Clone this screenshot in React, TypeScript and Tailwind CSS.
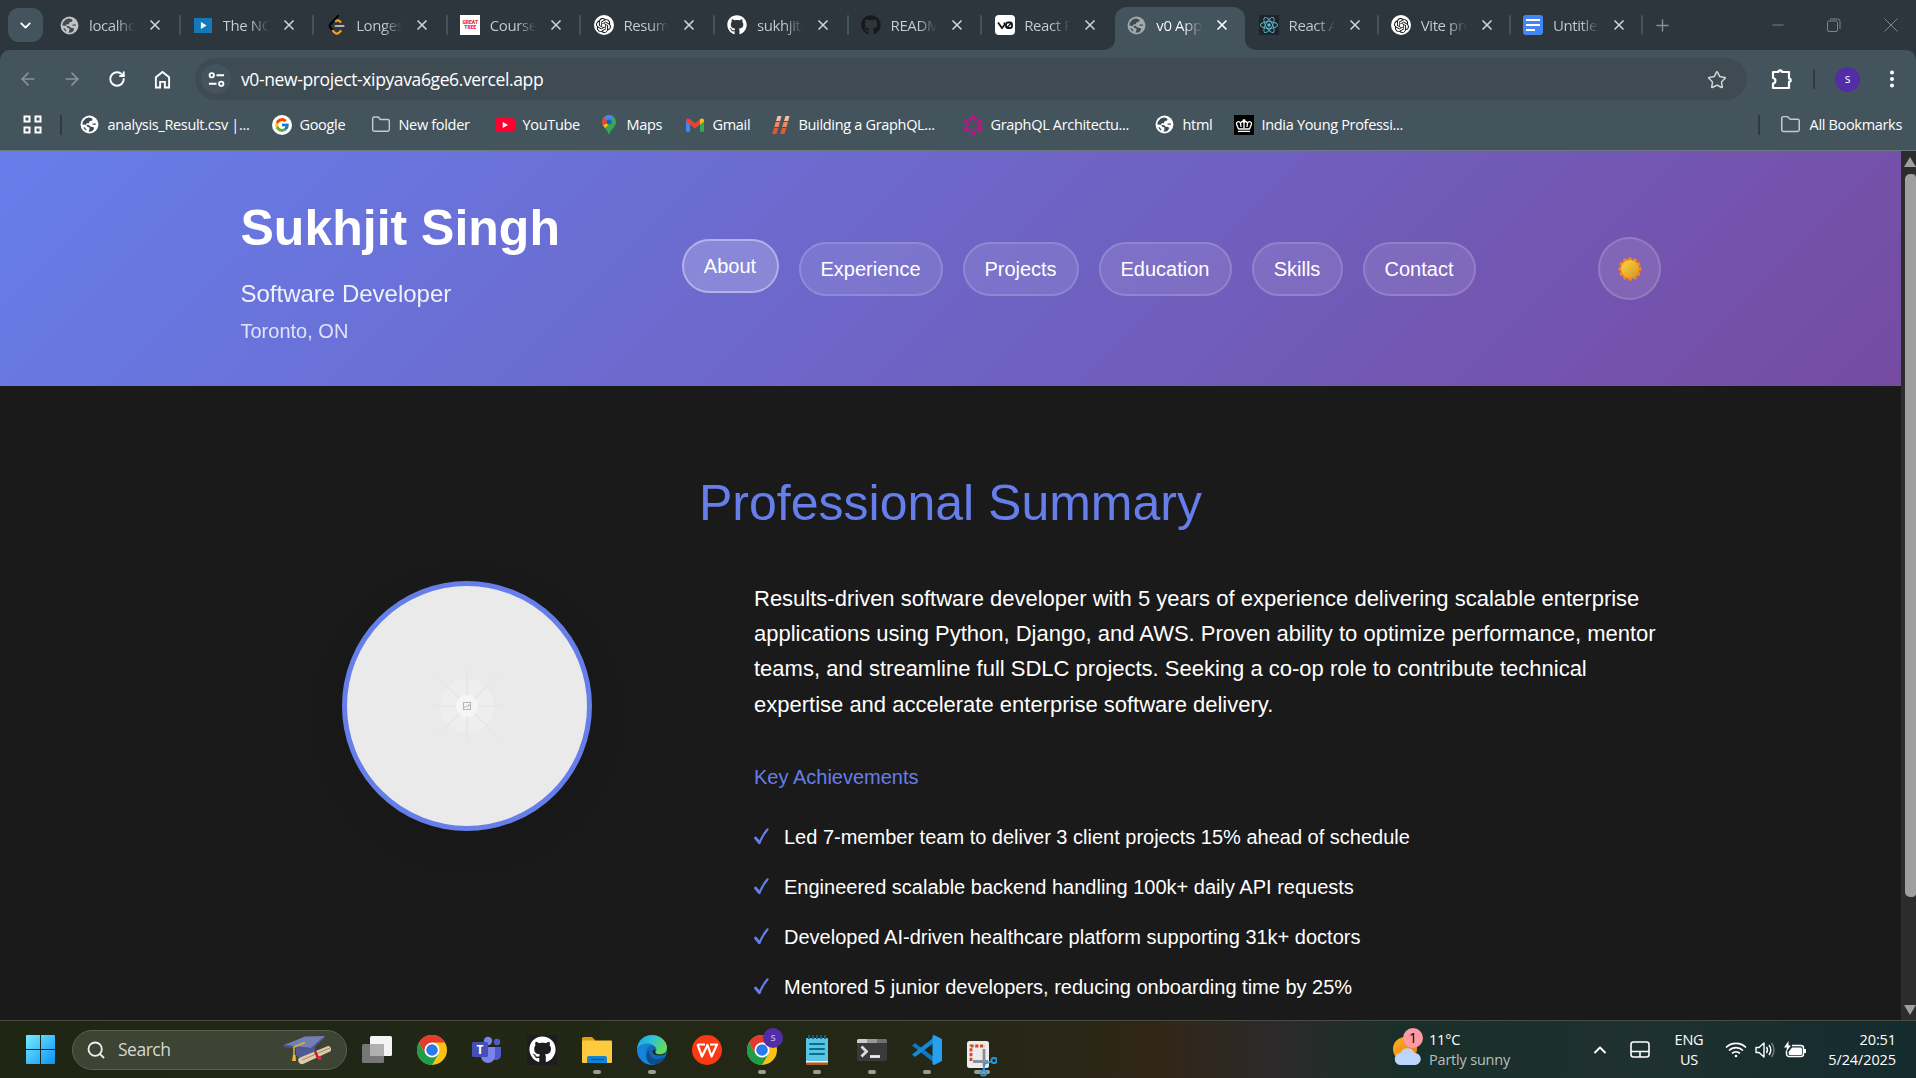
import React, { ReactNode } from "react";
import {
  ArrowLeft, ArrowRight, RotateCw, X, ChevronDown, Plus, Minus, Star, EllipsisVertical, Folder, Search, ChevronUp,
} from "lucide-react";
import { FaGithub } from "react-icons/fa";
import { SiOpenai, SiReact, SiGraphql } from "react-icons/si";
import { FcGoogle } from "react-icons/fc";

const Globe = ({ className = "" }: { className?: string }) => (
  <svg viewBox="0 0 20 20" className={`h-[19px] w-[19px] ${className}`}>
    <circle cx="10" cy="10" r="9.4" fill="currentColor" />
    <path d="M9.2 2.6 6 3.6 3 7l-.6 3 3.2.3c1.4.2 2 1 2.2 2.2l2 .4.2 2-1 2.7 3.8-.4 1.6-2.2c.6-1 .3-2-.8-2.3l-2.2-.4-1.8-1.6-3.3-.4.6-1.5h2.4l1-2.4 2.3-.3.6-1.6-1.3-1.4z" fill="#3d4a52" />
    <path d="M13.2 9.5h3.5M4 13l2.5 3" stroke="#3d4a52" strokeWidth="1.3" />
  </svg>
);

const Gpt = () => (
  <span className="flex h-5 w-5 items-center justify-center rounded-full bg-white">
    <SiOpenai size={15} color="#111" />
  </span>
);

const Docs = () => (
  <span className="flex h-5 w-5 flex-col justify-center gap-[2.5px] rounded-[3px] bg-[#4285f4] pl-[3px]">
    <i className="h-[2.5px] w-[14px] bg-white" />
    <i className="h-[2.5px] w-[14px] bg-white" />
    <i className="h-[2.5px] w-[9px] bg-white" />
  </span>
);

type Tab = { t: string; icon: ReactNode; active?: boolean; w: string; bar?: boolean };
const A = "w-[133.6px]";
const B = "w-[132.2px]";
const tabs: Tab[] = [
  { t: "localhost", icon: <Globe className="text-[#c0c3c5]" />, w: A, bar: true },
  {
    t: "The NO", w: A, bar: true,
    icon: (
      <span className="flex h-[15px] w-[18px] items-center justify-center bg-[#1479b8]">
        <svg viewBox="0 0 8 8" className="h-[7px] w-[7px]"><path d="M1 0l6.5 4L1 8z" fill="#fff" /></svg>
      </span>
    ),
  },
  {
    t: "Longest", w: A, bar: true,
    icon: (
      <svg viewBox="0 0 20 20" className="h-5 w-5" fill="none" strokeLinecap="round" strokeWidth="2.2">
        <path d="M11 1 3.6 9a3 3 0 0 0 0 4L6 15.6" stroke="#050505" />
        <path d="M9 6.2c1.6-1.3 3-.9 4.4.8M6 15.8l1.5 1.7c1.3 1.4 3 1.3 4.5.1l1.6-1.6" stroke="#f9a01b" />
        <path d="M8.5 11h8" stroke="#b3b3b3" />
      </svg>
    ),
  },
  {
    t: "Courses", w: A, bar: true,
    icon: (
      <span className="flex h-5 w-5 flex-col items-center justify-center bg-white font-['Roboto',sans-serif] text-[5px] leading-[5px] font-black text-[#e8283c]">
        <span>GREAT</span><span>TREE</span>
      </span>
    ),
  },
  { t: "Resume", icon: <Gpt />, w: A, bar: true },
  { t: "sukhjits", icon: <FaGithub size={20} color="#fff" />, w: A, bar: true },
  { t: "README", icon: <FaGithub size={20} color="#171a1d" />, w: A, bar: true },
  {
    t: "React Pr", w: B,
    icon: (
      <svg viewBox="0 0 20 20" className="h-5 w-5">
        <rect width="20" height="20" rx="4" fill="#fff" />
        <path d="M3 7.5 7 13 9.5 10V7.5" fill="none" stroke="#111" strokeWidth="1.8" />
        <rect x="11" y="7.5" width="6" height="5.5" rx="2" fill="none" stroke="#111" strokeWidth="1.8" />
        <path d="m12 12.5 4.5-4.5" stroke="#111" strokeWidth="1.3" />
      </svg>
    ),
  },
  { t: "v0 App", icon: <Globe className="text-[#a2a8ac]" />, w: B, active: true },
  {
    t: "React Ap", w: B, bar: true,
    icon: <span className="flex h-5 w-5 items-center justify-center bg-[#20232a]"><SiReact size={18} color="#58c4dc" /></span>,
  },
  { t: "Vite pro", icon: <Gpt />, w: B, bar: true },
  { t: "Untitled", icon: <Docs />, w: B, bar: true },
];

function TabStrip() {
  return (
    <div className="flex h-[50px] items-stretch bg-[#2c363c]">
      <div className="mt-2 ml-2 flex h-[34px] w-[35px] items-center justify-center rounded-[11px] bg-[#44545d]">
        <ChevronDown size={17} color="#fff" strokeWidth={2.6} />
      </div>
      <div className="ml-[3px] flex">
        {tabs.map((b, i) => (
          <div key={i} className={`relative flex items-end ${b.w}`}>
            {b.active && (
              <>
                <div className="absolute top-[7px] right-[1px] bottom-0 left-[2px] rounded-t-[12px] bg-[#44545d]" />
                <svg className="absolute bottom-0 left-[-10px] h-3 w-3" viewBox="0 0 12 12"><path d="M12 0v12H0C7 12 12 8 12 0" fill="#44545d" /></svg>
                <svg className="absolute right-[-11px] bottom-0 h-3 w-3" viewBox="0 0 12 12"><path d="M0 0v12h12C5 12 0 8 0 0" fill="#44545d" /></svg>
              </>
            )}
            <div className="relative flex h-[50px] w-full items-center pl-[13.5px]">
              <span className="flex w-5 shrink-0 justify-center">{b.icon}</span>
              <span className={`mt-[1px] ml-[9.5px] w-[46px] overflow-hidden bg-gradient-to-r from-60% to-[#ffffff00] to-100% bg-clip-text text-[15px] tracking-[-0.4px] whitespace-nowrap text-transparent ${b.active ? "from-white" : "from-[#c9cdcf]"}`}>
                {b.t}
              </span>
              <X size={16} strokeWidth={2.5} className={`ml-[12px] shrink-0 ${b.active ? "text-white" : "text-[#cfd3d5]"}`} />
              {b.bar && <i className="absolute top-[15px] right-[-1px] h-5 w-[2px] rounded bg-[#44545d]" />}
            </div>
          </div>
        ))}
      </div>
      <div className="flex flex-1 items-center">
        <Plus size={19} strokeWidth={1.8} className="ml-[11px] text-[#8b9195]" />
        <div className="ml-auto flex items-center text-[#7f868a]">
          <Minus size={18} strokeWidth={1.2} className="mr-[40px]" />
          <svg viewBox="0 0 14 14" className="mr-[43px] h-[14px] w-[14px]" fill="none" stroke="currentColor">
            <rect x=".5" y="3" width="10" height="10.5" rx="1.5" />
            <path d="M3 1h7.5a2.5 2.5 0 0 1 2.5 2.5V11" />
          </svg>
          <svg viewBox="0 0 14 14" className="mr-[18px] h-[14px] w-[14px]" stroke="currentColor"><path d="M.5.5l13 13M13.5.5l-13 13" /></svg>
        </div>
      </div>
    </div>
  );
}

function Toolbar() {
  return (
    <div className="bg-[#2c363c]">
      <div className="flex h-[50px] items-center rounded-t-[10px] bg-[#44545d] pt-2 text-white">
        <ArrowLeft size={20} strokeWidth={2} className="ml-[18px] text-[#8a949a]" />
        <ArrowRight size={20} strokeWidth={2} className="ml-[24px] text-[#8a949a]" />
        <RotateCw size={18} strokeWidth={2.5} className="ml-[26px]" />
        <svg viewBox="0 0 18 20" className="ml-[28px] h-[19px] w-[17px]" fill="none" stroke="#fff" strokeWidth="2"><path d="M2 18.500V7.500L9 2l7 5.500v11h-4.500v-6h-5v6z" /></svg>
        <div className="ml-[24px] flex h-[42px] w-[1552px] items-center rounded-full bg-[#3f4b52] pr-[20px] pl-[6px]">
          <div className="flex h-[30px] w-[30px] items-center justify-center rounded-full bg-[#44545d]">
            <svg viewBox="0 0 18 18" className="h-[17px] w-[17px]" fill="none" stroke="#fff" strokeWidth="2">
              <circle cx="4" cy="4.5" r="2.3" /><path d="M9 4.500h8M1 13.500h8" /><circle cx="14" cy="13.5" r="2.3" />
            </svg>
          </div>
          <span className="mt-[1px] ml-[10px] text-[17.5px] tracking-[-0.38px]">v0-new-project-xipyava6ge6.vercel.app</span>
          <Star size={20} strokeWidth={1.8} className="mt-[1px] ml-auto text-[#d0d4d6]" />
        </div>
        <svg viewBox="0 0 24 24" className="ml-[22px] h-[24px] w-[24px]" fill="none" stroke="#fff" strokeWidth="2.2" strokeLinejoin="round">
          <path d="M4 5h5.500a1.700 1.700 0 0 1 3.400 0H20v6.500a1.700 1.700 0 0 1 0 3.400V21H4v-4.500c3.200-.6 3.200-5 0-5.500z" />
        </svg>
        <i className="ml-[20px] h-5 w-[2px] bg-[#2f3b42]" />
        <span className="ml-[20px] flex h-[25px] w-[25px] items-center justify-center rounded-full bg-[#512da8] text-[12px]">s</span>
        <EllipsisVertical size={22} strokeWidth={2.4} className="ml-[21px]" />
      </div>
    </div>
  );
}

const bookmarks: { t: string; icon: ReactNode; w: string }[] = [
  { t: "analysis_Result.csv |...", icon: <Globe className="text-white" />, w: "w-[192px]" },
  { t: "Google", icon: <span className="flex h-5 w-5 items-center justify-center rounded-full bg-white"><FcGoogle size={16} /></span>, w: "w-[99px]" },
  { t: "New folder", icon: <Folder size={21} strokeWidth={1.7} className="text-[#c7cbcd]" />, w: "w-[124px]" },
  {
    t: "YouTube", w: "w-[104px]",
    icon: <span className="flex h-[14px] w-5 items-center justify-center rounded-[3px] bg-[#ff0033]"><svg viewBox="0 0 8 8" className="h-[6px] w-[6px]"><path d="M1 0l7 4-7 4z" fill="#fff" /></svg></span>,
  },
  {
    t: "Maps", w: "w-[86px]",
    icon: (
      <svg viewBox="0 0 14 20" className="h-5 w-[14px]">
        <path d="M7 0a7 7 0 0 0-7 7c0 5 5 6.500 7 13 2-6.500 7-8 7-13a7 7 0 0 0-7-7" fill="#34a853" />
        <path d="M7 0a7 7 0 0 0-5.300 2.400L7 7l4.700-5.300A7 7 0 0 0 7 0" fill="#4285f4" />
        <path d="M1.700 2.400A7 7 0 0 0 1 10.500L7 7z" fill="#ea4335" />
        <path d="M1 10.500 3.300 13 9 7H7z" fill="#fbbc04" />
        <circle cx="7" cy="7" r="2.5" fill="#1a5fc4" />
      </svg>
    ),
  },
  {
    t: "Gmail", w: "w-[86px]",
    icon: (
      <svg viewBox="0 0 20 15" className="h-[14px] w-[18px]">
        <path d="M0 3v12h4.500V6z" fill="#4285f4" /><path d="M20 3v12h-4.500V6z" fill="#34a853" />
        <path d="M0 2.500C0 0 2.500-.5 4.500 1L10 5.500 15.500 1v6L10 11.500 4.500 7 0 4z" fill="#ea4335" />
        <path d="M15.500 1C17.500-.5 20 0 20 2.500V4l-4.500 3z" fill="#fbbc04" />
      </svg>
    ),
  },
  {
    t: "Building a GraphQL...", w: "w-[192px]",
    icon: (
      <svg viewBox="0 0 20 20" className="h-5 w-5">
        <path d="M6.500 1h4l-1.300 5H5zM14.500 1h4l-1.300 5H13z" fill="#f7b9a4" />
        <path d="M4.700 7H9l-1.500 5H3.200zM12.700 7H17l-1.500 5h-4.300z" fill="#ee8766" />
        <path d="M3 13h4.300l-1.800 6H1.300zM11 13h4.300l-1.800 6H9.300z" fill="#df5a2e" />
      </svg>
    ),
  },
  { t: "GraphQL Architectu...", icon: <SiGraphql size={20} color="#e10098" />, w: "w-[192px]" },
  { t: "html", icon: <Globe className="text-white" />, w: "w-[79px]" },
  {
    t: "India Young Professi...", w: "w-[180px]",
    icon: (
      <span className="flex h-5 w-5 items-center justify-center bg-black">
        <svg viewBox="0 0 18 14" className="h-[14px] w-[18px]" fill="none" stroke="#fff" strokeWidth="1.3">
          <path d="M3 13.300h12M3.500 11 1.500 6C1 4 4 2.500 5.500 5L6 9M14.500 11l2-5C17 4 14 2.500 12.500 5L12 9M9 1v9M7.500 2.500h3M6 5c0-2 3-2 3 0 0-2 3-2 3 0M3.500 11h11" />
        </svg>
      </span>
    ),
  },
];

function Bookmarks() {
  return (
    <div className="flex h-[51px] items-center border-b border-[#6d787e] bg-[#44545d] pb-[1px] text-[14.5px] tracking-[-0.32px] text-white">
      <svg viewBox="0 0 19 19" className="ml-[22.5px] h-[19px] w-[19px]" fill="none" stroke="#fff" strokeWidth="2">
        <path d="M1.500 1.500h5v5h-5zM12.500 1.500h5v5h-5zM1.500 12.500h5v5h-5zM12.500 12.500h5v5h-5z" />
      </svg>
      <i className="mr-[18px] ml-[18px] h-5 w-[2px] bg-[#2f3b42]" />
      {bookmarks.map((b) => (
        <div key={b.t} className={`flex items-center whitespace-nowrap ${b.w}`}>
          <span className="flex w-5 shrink-0 justify-center">{b.icon}</span>
          <span className="ml-2">{b.t}</span>
        </div>
      ))}
      <div className="mr-[14px] ml-auto flex items-center">
        <i className="mr-[20px] h-5 w-[2px] bg-[#2f3b42]" />
        <Folder size={21} strokeWidth={1.7} className="mr-[9px] text-[#c7cbcd]" />
        <span>All Bookmarks</span>
      </div>
    </div>
  );
}

const nav = [
  { t: "About", w: "w-[97px]" }, { t: "Experience", w: "w-[144px]" }, { t: "Projects", w: "w-[116px]" },
  { t: "Education", w: "w-[133px]" }, { t: "Skills", w: "w-[91px]" }, { t: "Contact", w: "w-[113px]" },
];

const Sun = () => (
  <svg viewBox="-12 -12 24 24" className="h-6 w-6">
    <defs><linearGradient id="sun" x1="0" y1="0" x2="1" y2="1"><stop offset="0" stopColor="#ffd83d" /><stop offset="1" stopColor="#cf9425" /></linearGradient></defs>
    {[0, 30, 60, 90, 120, 150, 180, 210, 240, 270, 300, 330].map((a) => (
      <circle key={a} cy="-9.5" r="2.2" fill="#f58220" transform={`rotate(${a})`} />
    ))}
    <circle r="9.3" fill="#f58220" /><circle r="8.9" fill="url(#sun)" />
  </svg>
);

function Header() {
  return (
    <header className="flex h-[235px] items-start bg-[linear-gradient(135deg,#667eea_0%,#764ba2_100%)] pr-[240px] pl-[240.5px] text-white">
      <div className="w-[441px] pt-[44px]">
        <h1 className="text-[50px] leading-[66px] font-bold">Sukhjit Singh</h1>
        <p className="mt-[13px] text-[24px] leading-[40px] opacity-90">Software Developer</p>
        <p className="text-[20px] leading-[34px] opacity-80">Toronto, ON</p>
      </div>
      <nav className="flex gap-5 pt-[91px]">
        {nav.map((n, i) => (
          <span key={n.t} className={`flex h-[54px] items-center justify-center rounded-full border-2 text-[20px] ${n.w} ${i === 0 ? "-mt-[3px] border-white/35 bg-white/20" : "border-white/15 bg-white/10"}`}>
            {n.t}
          </span>
        ))}
      </nav>
      <div className="mt-[86px] ml-auto flex h-[63px] w-[63px] items-center justify-center rounded-full border-2 border-white/15 bg-white/10">
        <Sun />
      </div>
    </header>
  );
}

const Avatar = () => (
  <div className="mt-[39px] ml-[101px] h-[250px] w-[250px] shrink-0 rounded-full border-5 border-[#667eea] bg-[#eaeaea] shadow-[0_12px_40px_rgba(0,0,0,0.12)]">
    <svg viewBox="-120 -120 240 240" className="h-full w-full">
      <defs>
        <radialGradient id="ray" gradientUnits="userSpaceOnUse" cx="0" cy="0" r="52"><stop offset="0.4" stopColor="#e2e2e2" /><stop offset="1" stopColor="#eaeaea" /></radialGradient>
      </defs>
      <circle r="27" fill="#eeeeee" />
      <g fill="url(#ray)">
        <path d="M-.6-37H.6V37H-.6zM-37-.6H37V.6H-37z" />
        <path d="M-.6-51H.6V51H-.6zM-51-.6H51V.6H-51z" transform="rotate(45)" />
      </g>
      <circle r="11" fill="#f5f5f5" />
      <g fill="none" stroke="#b5b5b5" strokeWidth="1">
        <rect x="-3.5" y="-3.5" width="7" height="7" /><path d="M-3 2-.8-.2.7 1.200 2-1.500 3.300.5" />
      </g>
    </svg>
  </div>
);

const Check = () => (
  <svg viewBox="0 0 15 17" className="mr-[15px] h-[17px] w-[15px]" fill="none" stroke="#667eea" strokeLinecap="round" strokeLinejoin="round">
    <path d="M1.500 10 5.300 14.500" strokeWidth="2.800" />
    <path d="M5.300 15C7.500 10 10 5.500 13.600 1.300" strokeWidth="2.200" />
  </svg>
);

const achievements = [
  "Led 7-member team to deliver 3 client projects 15% ahead of schedule",
  "Engineered scalable backend handling 100k+ daily API requests",
  "Developed AI-driven healthcare platform supporting 31k+ doctors",
  "Mentored 5 junior developers, reducing onboarding time by 25%",
];

function Page() {
  return (
    <div className="flex h-[869px] bg-[#1a1a1a] font-['Liberation_Sans',Arial,sans-serif]">
      <main className="h-full w-[1901px] overflow-hidden">
        <Header />
        <h2 className="mt-[77px] text-center text-[50px] leading-[80px] text-[#667eea]">Professional Summary</h2>
        <div className="-mt-[1px] flex pl-[240.5px]">
          <Avatar />
          <div className="ml-[162.5px] pt-[39px] text-white">
            <p className="text-[22px] leading-[35.2px] whitespace-nowrap">
              Results-driven software developer with 5 years of experience delivering scalable enterprise<br />
              applications using Python, Django, and AWS. Proven ability to optimize performance, mentor<br />
              teams, and streamline full SDLC projects. Seeking a co-op role to contribute technical<br />
              expertise and accelerate enterprise software delivery.
            </p>
            <h3 className="mt-[39px] text-[20px] leading-8 text-[#667eea]">Key Achievements</h3>
            <ul className="mt-[19px]">
              {achievements.map((a) => (
                <li key={a} className="flex h-[50px] items-center text-[20px]">
                  <Check />
                  {a}
                </li>
              ))}
            </ul>
          </div>
        </div>
      </main>
      <div className="flex w-[15px] flex-col items-end overflow-hidden bg-[#2c2c2c]">
        <svg viewBox="0 0 12 10" className="mt-[6px] h-[10px] w-3"><path d="M0 10 6 0l6 10z" fill="#9f9f9f" /></svg>
        <div className="mt-[7px] h-[723px] w-[11px] rounded-l-[5px] rounded-r-[4px] bg-[#9f9f9f]" />
        <svg viewBox="0 0 12 10" className="mt-auto mb-[5px] h-[10px] w-3"><path d="M0 0l6 10 6-10z" fill="#9f9f9f" /></svg>
      </div>
    </div>
  );
}

const Chrome = () => (
  <svg viewBox="0 0 48 48" className="h-[30px] w-[30px]">
    <circle cx="24" cy="24" r="24" fill="#fbc116" />
    <path d="M3.200 12A24 24 0 0 0 24 48L34.400 30 24 24 13.600 30z" fill="#1e9e4a" />
    <path d="M24 12h20.800A24 24 0 0 0 3.200 12l10.400 18z" fill="#e33b2e" />
    <circle cx="24" cy="24" r="12" fill="#fff" /><circle cx="24" cy="24" r="9.3" fill="#2b79ef" />
  </svg>
);

const apps: { icon: ReactNode; dot?: boolean }[] = [
  {
    icon: (
      <svg viewBox="0 0 30 30" className="h-[30px] w-[30px]">
        <rect y="9" width="22" height="19" rx="1.5" fill="#777" /><rect x="8" y="1" width="22" height="20" rx="1.5" fill="#f4f4f4" />
        <path d="M8 9h14v12H8z" fill="#b0b0b0" />
      </svg>
    ),
  },
  { icon: <Chrome /> },
  {
    icon: (
      <svg viewBox="0 0 30 30" className="h-[30px] w-[30px]">
        <circle cx="25" cy="7" r="3.2" fill="#5059c9" /><path d="M20 12h9v8a5 5 0 0 1-9 3z" fill="#5059c9" />
        <circle cx="16" cy="6" r="4.2" fill="#7b83eb" /><path d="M9 12h14v9a7 7 0 0 1-14 0z" fill="#7b83eb" />
        <rect y="7" width="16" height="15" rx="1.5" fill="#464eb8" />
        <text x="8" y="19" textAnchor="middle" fontSize="12" fontWeight="700" fill="#fff">T</text>
      </svg>
    ),
  },
  { icon: <span className="flex h-[30px] w-[30px] items-center justify-center bg-[#1f1c20]"><FaGithub size={27} color="#fff" /></span> },
  {
    dot: true,
    icon: (
      <svg viewBox="0 0 30 30" className="h-[30px] w-[30px]">
        <path d="M0 3.500A1.500 1.500 0 0 1 1.500 2H10l3 3v5H0z" fill="#e09c0b" /><rect y="5.5" width="30" height="22.5" rx="1" fill="#fdca3d" />
        <path d="M5 28v-5a2 2 0 0 1 2-2h16a2 2 0 0 1 2 2v5z" fill="#1583d4" /><path d="M9 24.500h13" stroke="#0c5491" strokeWidth="1.2" />
      </svg>
    ),
  },
  {
    dot: true,
    icon: (
      <svg viewBox="0 0 30 30" className="h-[30px] w-[30px]">
        <defs>
          <linearGradient id="edgeTop" x1="0" y1="0" x2="1" y2=".5"><stop offset="0" stopColor="#2098e0" /><stop offset=".5" stopColor="#2fc3d4" /><stop offset="1" stopColor="#63dd58" /></linearGradient>
        </defs>
        <circle cx="15" cy="15" r="15" fill="#1269b8" />
        <path d="M0 14C1 5 7 0 15 0s15 6 15 12.500c0 5-4 7-7.500 7-3 0-5-1-4-2.500 1.500-2 1-4-.5-5.500C14 8 5 8 0 14" fill="url(#edgeTop)" />
        <path d="M0 14c3-6 12-6.500 16-4-5 1-8 5-7 10 .8 4 4 8 8.500 9.700C8 31 0 24 0 14" fill="#1684d8" />
        <path d="M12.500 15c-1.500 6 4 10 9.500 9 3-.5 5-1.500 6-2-2.500 5.500-8 8-13.500 7.500C8 26 8 18 12.500 15" fill="#0f4c8c" />
        <path d="M30 16c-1 3-4 4.500-7.500 4.500-3.500 0-6-1-7-3-.5-1.500.5-2.500 2-3 1 .5.8 1.500.5 2.500.5 1.500 2 2.500 4.500 2.500 3.500 0 6.500-1.500 7.500-3.500" fill="#222817" />
      </svg>
    ),
  },
  {
    icon: (
      <svg viewBox="0 0 30 30" className="h-[30px] w-[30px]">
        <circle cx="15" cy="15" r="15" fill="#fb3a14" />
        <path d="M5.500 9.500H13M5.500 9.500l4.500 12L15.500 10l4 11.500L25 9.500h-7" fill="none" stroke="#fff" strokeWidth="2.2" strokeLinejoin="round" />
      </svg>
    ),
  },
  {
    dot: true,
    icon: (
      <span className="relative">
        <Chrome />
        <span className="absolute -top-[7px] left-[16px] flex h-5 w-5 items-center justify-center rounded-full bg-[#512da8] text-[11px] text-[#cfc3ec]">s</span>
      </span>
    ),
  },
  {
    dot: true,
    icon: (
      <svg viewBox="0 0 24 30" className="h-[30px] w-6">
        <rect x="1" y="25" width="22" height="5" rx="1" fill="#b4581b" /><rect x="1" y="24" width="22" height="3.5" fill="#f2f2f2" />
        <rect x="1" y="3" width="22" height="23" rx="1" fill="#58c5e4" />
        <path d="M4 0v4M8 0v4M12 0v4M16 0v4M20 0v4" stroke="#10617e" strokeWidth="2" />
        <path d="M5 9h14M5 14h14M5 19h14" stroke="#0d6c8c" strokeWidth="2" strokeLinecap="round" />
      </svg>
    ),
  },
  {
    dot: true,
    icon: (
      <svg viewBox="0 0 30 30" className="h-[30px] w-[30px]">
        <rect y="4" width="30" height="22" rx="1.5" fill="#3a3a3c" /><path d="M0 8V5.500A1.500 1.500 0 0 1 1.500 4H10v4z" fill="#ccc" />
        <path d="M10 4h10v4H10z" fill="#999" /><path d="M20 4h8.500A1.500 1.500 0 0 1 30 5.500V8H20z" fill="#707070" />
        <path d="m4.500 11.500 5 5-5 5" fill="none" stroke="#ddd" strokeWidth="2.8" /><path d="M13 21.500h10" stroke="#eee" strokeWidth="2.8" />
      </svg>
    ),
  },
  {
    dot: true,
    icon: (
      <svg viewBox="0 0 30 30" className="h-[30px] w-[30px]">
        <path d="M0 10.500 3 8l20 15v5.500z" fill="#0a78c2" /><path d="m0 19.500 3 2.500L23 7V1.500z" fill="#1489d6" />
        <path d="m22 0 7 3.500c.7.300 1 1 1 1.500v20c0 .5-.3 1.200-1 1.500L22 30c-1 0-1.500-.8-1.500-1.500v-27C20.500.8 21 0 22 0" fill="#26a0f2" />
      </svg>
    ),
  },
  {
    dot: true,
    icon: (
      <svg viewBox="0 0 30 36" className="relative top-[9px] h-9 w-[30px]">
        <rect width="22" height="27" rx="2.5" fill="#ececee" />
        <path d="M4 20V5h14" fill="none" stroke="#d8471c" strokeWidth="2.8" strokeDasharray="3.2 1.6" />
        <path d="M17 8v17M6 20.500h15" stroke="#8a8f94" strokeWidth="2.8" />
        <circle cx="27" cy="19.5" r="2.6" fill="none" stroke="#2a9be0" strokeWidth="1.8" />
        <circle cx="16.5" cy="32" r="2.6" fill="none" stroke="#2a9be0" strokeWidth="1.8" />
        <path d="m24.500 20.500-7.500 2.500v6.500" fill="none" stroke="#2a9be0" strokeWidth="1.8" />
      </svg>
    ),
  },
];

function Taskbar() {
  return (
    <div className="flex h-[58px] items-center border-t border-[#4a4a46] bg-[linear-gradient(90deg,#1f2614_0%,#222716_35%,#262717_52%,#312618_61%,#2b2a2b_67%,#1a2f29_73%,#1f3030_86%,#142b2e_100%)] text-white">
      <svg viewBox="0 0 29 29" className="ml-[26px] h-[29px] w-[29px]">
        <defs><linearGradient id="win" x1="0" y1="0" x2="1" y2="1"><stop offset="0" stopColor="#76ecff" /><stop offset="1" stopColor="#0c93f5" /></linearGradient></defs>
        <path d="M1 0h13v14H0V1a1 1 0 0 1 1-1M15 0h13a1 1 0 0 1 1 1v13H15zM0 15h14v14H1a1 1 0 0 1-1-1zM15 15h14v13a1 1 0 0 1-1 1H15z" fill="url(#win)" />
      </svg>
      <div className="ml-[17px] flex h-10 w-[275px] items-center rounded-full border border-[#59604f] bg-[#3d4434] pr-[14px] pl-[13px]">
        <Search size={20} strokeWidth={2.2} color="#eee" />
        <span className="ml-[12px] text-[17.5px] tracking-[-0.5px] text-[#d5d7d2]">Search</span>
        <svg viewBox="0 0 48 30" className="ml-auto h-[30px] w-12">
          <path d="M12 10v10c5 5 14 4 19-1V8z" fill="#4d5a94" />
          <path d="M0 10 21 1.500 41 1 27 13z" fill="#7380b4" /><path d="M0 10 27 13 41 1v1.500L27.500 15 0 12z" fill="#4a568d" />
          <path d="M21 7.500 10 12v10" fill="none" stroke="#e2b23a" strokeWidth="1.5" /><path d="m9 20-1 6h4l-.5-6z" fill="#eeb92f" />
          <path d="m15 23 29-12c3-.5 4 4 2 5.500L19 29c-4 1-6-4-4-6" fill="#ddcba9" /><path d="m18 25 28-12" stroke="#9b8a68" />
          <path d="m31 16 3 7" stroke="#c61c2a" strokeWidth="2.5" /><circle cx="35.5" cy="23" r="2" fill="#e02a38" />
        </svg>
      </div>
      <div className="ml-[3px] flex">
        {apps.map((a, i) => (
          <div key={i} className="relative flex h-[57px] w-[54.95px] items-center justify-center">
            {a.dot && <i className={`absolute bottom-[4px] h-1 rounded-full bg-[#9b9c94] ${i === apps.length - 1 ? "w-4" : "w-2"}`} />}
            {a.icon}
          </div>
        ))}
      </div>
      <div className="mr-[20px] ml-auto flex items-center">
        <div className="relative mr-[7px] h-[44px] w-[30px]">
          <svg viewBox="0 0 30 44" className="h-[44px] w-[30px] overflow-visible">
            <defs><linearGradient id="wx" x1="0" y1="0" x2="1" y2="1"><stop offset="0" stopColor="#fbb024" /><stop offset="1" stopColor="#f1760f" /></linearGradient></defs>
            <circle cx="13" cy="21" r="12" fill="url(#wx)" />
            <path d="M9 37a6 6 0 0 1-.5-12 7.500 7.500 0 0 1 14 0A6 6 0 0 1 23 37z" fill="#bcd6fb" />
          </svg>
          <span className="absolute top-0 left-[11px] flex h-5 w-5 items-center justify-center rounded-full bg-[#ff99a4] text-[14px] text-black">1</span>
        </div>
        <div className="w-[161px] text-[14.5px] leading-5 tracking-[-0.2px]">
          <div>11°C</div><div className="text-[#b9c0bf]">Partly sunny</div>
        </div>
        <ChevronUp size={20} strokeWidth={2.2} className="mr-[20px]" />
        <svg viewBox="0 0 20 17" className="h-[17px] w-5" fill="none" stroke="#fff" strokeWidth="1.6"><rect x="1" y="1" width="18" height="15" rx="2.5" /><path d="M1 10.500h18M10 10.500V16" /></svg>
        <div className="ml-[22px] w-[34px] text-center text-[14.5px] leading-5 tracking-[-0.2px]"><div>ENG</div><div>US</div></div>
        <svg viewBox="0 0 22 17" className="ml-[19px] h-[17px] w-[22px]" fill="none" stroke="#fff" strokeWidth="1.7">
          <path d="M1 6.500a14 14 0 0 1 20 0M4 9.500a10 10 0 0 1 14 0M7 12.300a6 6 0 0 1 8 0" /><circle cx="11" cy="15" r="1.3" fill="#fff" stroke="none" />
        </svg>
        <svg viewBox="0 0 20 18" className="ml-[8px] h-[18px] w-5" fill="none" stroke="#fff" strokeWidth="1.4">
          <path d="M1 6.500h3L9 2v14l-5-4.500H1z" strokeLinejoin="round" /><path d="M11.500 6q2 3 0 6M14 4q3.600 5 0 10" /><path d="M16.500 2q5 7 0 14" stroke="#728080" />
        </svg>
        <svg viewBox="0 0 22 18" className="ml-[9px] h-[18px] w-[22px]">
          <path d="M8 4.500h9a2.500 2.500 0 0 1 2.500 2.500v6a2.500 2.500 0 0 1-2.500 2.500H5A2.500 2.500 0 0 1 2.500 13v-3" fill="none" stroke="#fff" strokeWidth="1.5" />
          <path d="M8 6.500h9l1 1v6l-1 .5H5l-.5-3z" fill="#fff" /><path d="M20 8h2v4h-2z" fill="#fff" /><path d="M4.500 0 0 6.500h3L2 11l5-6.500H4.500z" fill="#fff" />
        </svg>
        <div className="ml-[18px] w-[72px] text-right text-[14.5px] leading-5 tracking-[-0.1px] whitespace-nowrap"><div>20:51</div><div>5/24/2025</div></div>
      </div>
    </div>
  );
}

export default function App() {
  return (
    <div className="h-[1078px] w-[1916px] overflow-hidden bg-[#1a1a1a] font-['Open_Sans','Noto_Sans',sans-serif]">
      <TabStrip />
      <Toolbar />
      <Bookmarks />
      <Page />
      <Taskbar />
    </div>
  );
}
